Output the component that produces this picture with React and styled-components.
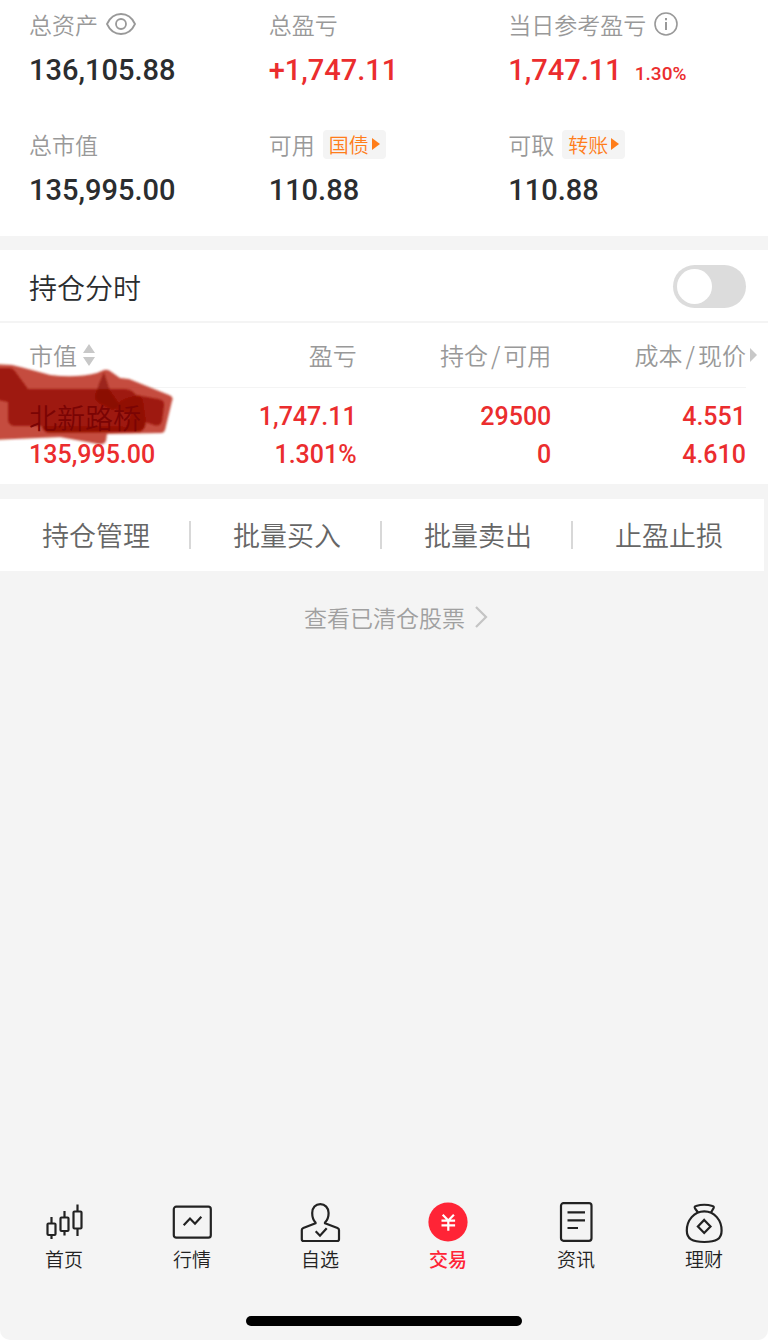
import React, { useState } from "react";
import styled, { createGlobalStyle } from "styled-components";

const colors = {
  page: "#f4f4f4",
  white: "#ffffff",
  text: "#2b2d2f",
  gray: "#999999",
  lightGray: "#c8c8c8",
  line: "#f4f4f4",
  red: "#eb2d2e",
  brand: "#ff2436",
  orange: "#ff7d1a",
};

const positions = [
  {
    name: "北新路桥",
    value: "135,995.00",
    profit: "1,747.11",
    rate: "1.301%",
    held: "29500",
    available: "0",
    cost: "4.551",
    price: "4.610",
  },
];

const actions = ["持仓管理", "批量买入", "批量卖出", "止盈止损"];

const EyeIcon = () => (
  <svg width="30" height="24" viewBox="0 0 30 24" fill="none" stroke="#999" strokeWidth="1.8">
    <path d="M1 12C4 5.500 9 2 15 2s11 3.500 14 10c-3 6.500-8 10-14 10S4 18.500 1 12z" />
    <circle cx="15" cy="12" r="5" />
  </svg>
);

const InfoIcon = () => (
  <svg width="24" height="24" viewBox="0 0 24 24" fill="none" stroke="#999" strokeWidth="1.6">
    <circle cx="12" cy="12" r="11" />
    <path d="M12 10v8" strokeWidth="2" />
    <path d="M12 6v2.200" strokeWidth="2" />
  </svg>
);

const TabIcon = ({ children }) => (
  <TabSvg viewBox="0 0 40 40" fill="none" stroke="currentColor" strokeWidth="2.200">
    {children}
  </TabSvg>
);

const tabs = [
  {
    label: "首页",
    icon: (
      <>
        <rect x="3.500" y="21.500" width="8" height="11.500" rx="1" />
        <rect x="16.500" y="15.500" width="8" height="13.500" rx="1" />
        <rect x="29.500" y="9.500" width="8" height="17" rx="1" />
        <path d="M7.500 15v6.500M7.500 33v4M20.500 9v6.500M20.500 29v4.500M33.500 2.500v7M33.500 26.500V34" />
      </>
    ),
  },
  {
    label: "行情",
    icon: (
      <>
        <rect x="1.800" y="4.700" width="37" height="31" rx="2.500" />
        <path d="M11.700 23.300L18 16.500l5 5.200 6.300-7" />
      </>
    ),
  },
  {
    label: "自选",
    icon: (
      <>
        <path d="M15.500 20.500C13 18 12.200 14.500 12.200 11c0-5.300 3.400-8.800 8.100-8.800s8.300 3.500 8.300 8.800c0 3.500-1 7-3.600 9.500v.8L37.500 26c1 .4 1.500 1 1.500 2v9.300c0 1.200-.5 1.700-1.700 1.700H3.500c-1.200 0-1.700-.5-1.700-1.700V28c0-1 .5-1.600 1.500-2l12.200-4.700z" />
        <path d="M15.700 29.200l4.300 4.500 6.700-7.400" />
      </>
    ),
  },
  {
    label: "交易",
    active: true,
    icon: (
      <>
        <circle cx="20" cy="20" r="19.600" fill="currentColor" stroke="none" />
        <path
          stroke="#fff"
          d="M14.700 12.700l5.600 5.800 5.600-5.800M13.500 18.700h13.600M13.500 23.300h13.600M20.300 18v10.800"
        />
      </>
    ),
  },
  {
    label: "资讯",
    icon: (
      <>
        <rect x="5" y="1.200" width="30.500" height="37.600" rx="2.500" />
        <path d="M11.500 10.400h17.500M11.500 18.400h17.500M11.500 26h10.500" />
      </>
    ),
  },
  {
    label: "理财",
    icon: (
      <>
        <path d="M14 10.500l-3-4.200c-.7-1.200-.2-2 1-2.300 5-1.500 11.500-1.500 16.500 0 1.200.3 1.600 1.100 1 2.300L27 10.500" />
        <path d="M20.300 9.300C10 9.300 2.800 18.500 2.800 28.500c0 8.500 5.500 11.500 17.500 11.500s17.300-3 17.300-11.500c0-10-7-19.200-17.300-19.200z" />
        <path d="M20.200 17.900l6.300 6.500-6.300 6.500-6.300-6.500z" />
      </>
    ),
  },
];

const Summary = () => (
  <SummaryGrid>
    <Item>
      <Label>
        总资产
        <IconButton type="button" aria-label="隐藏资产">
          <EyeIcon />
        </IconButton>
      </Label>
      <Value>136,105.88</Value>
    </Item>
    <Item>
      <Label>总盈亏</Label>
      <Value $up>+1,747.11</Value>
    </Item>
    <Item>
      <Label>
        当日参考盈亏
        <IconButton type="button" aria-label="说明">
          <InfoIcon />
        </IconButton>
      </Label>
      <Value $up>
        1,747.11<Rate>1.30%</Rate>
      </Value>
    </Item>
    <Item>
      <Label>总市值</Label>
      <Value>135,995.00</Value>
    </Item>
    <Item>
      <Label>
        可用
        <Tag type="button">
          国债
          <TagArrow />
        </Tag>
      </Label>
      <Value>110.88</Value>
    </Item>
    <Item>
      <Label>
        可取
        <Tag type="button">
          转账
          <TagArrow />
        </Tag>
      </Label>
      <Value>110.88</Value>
    </Item>
  </SummaryGrid>
);

// brush strokes painted around the stock name
const Brush = () => (
  <BrushSvg viewBox="0 360 180 90" aria-hidden="true">
    <defs>
      <filter id="soft">
        <feGaussianBlur stdDeviation="0.9" />
      </filter>
    </defs>
    <g filter="url(#soft)">
      <path
        fill="#bb2f1c"
        opacity="0.860"
        d="M-6 364L12 365C26 368 38 372 50 375C66 377 82 377 97 373L104 370Q107 369 110 371L120 378L129 379L169 395Q174 397 172 401L165 430Q164 433 161 433L107 434L106 441Q104 445 98 444L60 437L-6 440z"
      />
      <path
        fill="#9a0f05"
        opacity="0.900"
        d="M-6 368L10 368Q14 369 17 374L28 389L124 389Q132 389 136 395L158 399Q165 400 164 406L162 421Q160 427 154 425L145 422Q146 430 139 432L50 433Q43 433 42 426L14 426Q8 425 8 419L8 402L-6 399z"
      />
      <path fill="#7c0500" opacity="0.550" d="M104 372Q98 384 95 397Q96 402 104 405L113 410L119 404L110 391z" />
      <path
        fill="#7c0500"
        opacity="0.400"
        d="M113 408Q122 398 136 396Q142 396 143 403L146 424Q145 429 138 431L50 432Q43 431 42 426L126 427L132 414z"
      />
    </g>
  </BrushSvg>
);

const Positions = () => {
  const [minuteChart, setMinuteChart] = useState(false);

  return (
    <Section>
      <SwitchRow>
        <span>持仓分时</span>
        <Switch
          type="checkbox"
          role="switch"
          checked={minuteChart}
          onChange={(e) => setMinuteChart(e.target.checked)}
        />
      </SwitchRow>
      <TableWrap>
        <Table>
          <thead>
            <tr>
              <Th $first>
                <SortButton type="button">
                  市值
                  <svg width="12" height="22" viewBox="0 0 12 22" fill="#c8c8c8">
                    <path d="M6 0l6 9H0zM0 13h12l-6 9z" />
                  </svg>
                </SortButton>
              </Th>
              <Th>盈亏</Th>
              <Th>
                持仓<Slash>/</Slash>可用
              </Th>
              <Th>
                成本<Slash>/</Slash>现价
                <MoreArrow />
              </Th>
            </tr>
          </thead>
          <tbody>
            {positions.map((p) => (
              <tr key={p.name}>
                <Td $first>
                  <StockName>{p.name}</StockName>
                  <Line>{p.value}</Line>
                </Td>
                <Td>
                  <Line>{p.profit}</Line>
                  <Line>{p.rate}</Line>
                </Td>
                <Td>
                  <Line>{p.held}</Line>
                  <Line>{p.available}</Line>
                </Td>
                <Td>
                  <Line>{p.cost}</Line>
                  <Line>{p.price}</Line>
                </Td>
              </tr>
            ))}
          </tbody>
        </Table>
      </TableWrap>
      <Brush />
    </Section>
  );
};

const App = () => (
  <>
    <GlobalStyle />
    <Screen>
      <Summary />
      <Positions />
      <Actions>
        {actions.map((action) => (
          <Action key={action} type="button">
            {action}
          </Action>
        ))}
      </Actions>
      <ClearedLink href="#cleared">
        查看已清仓股票
        <svg width="14" height="22" viewBox="0 0 14 22" fill="none" stroke="#c4c4c4" strokeWidth="2.200">
          <path d="M2 1l10 10L2 21" />
        </svg>
      </ClearedLink>
      <TabBar>
        {tabs.map((tab) => (
          <Tab key={tab.label} href={`#${tab.label}`} $active={tab.active}>
            <TabIcon>{tab.icon}</TabIcon>
            {tab.label}
          </Tab>
        ))}
      </TabBar>
      <HomeIndicator />
    </Screen>
  </>
);

const GlobalStyle = createGlobalStyle`
  * {
    box-sizing: border-box;
  }

  body {
    margin: 0;
    background: ${colors.white};
    color: ${colors.text};
    font-family: "Noto Sans CJK SC", sans-serif;
    font-weight: 350;
  }

  button {
    border: 0;
    padding: 0;
    background: none;
    color: inherit;
    font: inherit;
  }

  a {
    text-decoration: none;
  }

  svg {
    display: block;
    flex-shrink: 0;
  }
`;

const Screen = styled.div`
  min-height: calc(100vh - 1px);
  display: flex;
  flex-direction: column;
  background: ${colors.page};
  border-radius: 0 0 10px 10px;
`;

const SummaryGrid = styled.section`
  display: grid;
  grid-template-columns: repeat(3, 1fr);
  row-gap: 42px;
  padding: 9px 20px 29px 29px;
  background: ${colors.white};
`;

const Item = styled.div`
  display: flex;
  flex-direction: column;
  gap: 14px;
`;

const Label = styled.div`
  display: flex;
  align-items: center;
  gap: 8px;
  height: 30px;
  color: ${colors.gray};
  font-size: 23px;
  line-height: 30px;
  white-space: nowrap;
`;

const Value = styled.div`
  line-height: 34px;
  color: ${(props) => (props.$up ? colors.red : colors.text)};
  font-family: Roboto, sans-serif;
  font-size: 29px;
  font-weight: 500;
  white-space: nowrap;
`;

const Rate = styled.span`
  margin-left: 13px;
  font-size: 19px;
  line-height: 1;
`;

const IconButton = styled.button`
  display: flex;
`;

const Tag = styled.button`
  display: flex;
  align-items: center;
  gap: 3px;
  height: 29px;
  padding: 0 6px;
  border-radius: 4px;
  background: ${colors.page};
  color: ${colors.orange};
  font-size: 20px;
  line-height: 29px;
`;

const TagArrow = styled.span`
  border: 6px solid transparent;
  border-left: 8px solid ${colors.orange};
  border-right: 0;
`;

const Section = styled.section`
  position: relative;
  margin: 14px 0 15px;
  background: ${colors.white};
`;

const SwitchRow = styled.label`
  display: flex;
  align-items: center;
  justify-content: space-between;
  height: 73px;
  padding: 2px 22px 0 29px;
  border-bottom: 2px solid ${colors.line};
  font-size: 28px;
`;

const Switch = styled.input`
  appearance: none;
  width: 73px;
  height: 43px;
  margin: 0;
  padding: 4px;
  border-radius: 22px;
  background: ${(props) => (props.checked ? colors.brand : "#dcdcdc")};

  &::before {
    content: "";
    display: block;
    width: 35px;
    height: 35px;
    margin-left: ${(props) => (props.checked ? "30px" : "0")};
    border-radius: 50%;
    background: ${colors.white};
  }
`;

const TableWrap = styled.div`
  padding: 0 22px 0 29px;
`;

const Table = styled.table`
  width: 100%;
  table-layout: fixed;
  border-collapse: collapse;
`;

const Th = styled.th`
  position: relative;
  width: ${(props) => (props.$first ? "133px" : "auto")};
  height: 64px;
  padding: 0;
  border-bottom: 1px solid ${colors.line};
  color: ${colors.gray};
  font-size: 24px;
  font-weight: 350;
  text-align: ${(props) => (props.$first ? "left" : "right")};
  white-space: nowrap;
`;

const SortButton = styled.button`
  display: flex;
  align-items: center;
  gap: 6px;
`;

const Slash = styled.span`
  margin: 0 3px;
`;

const MoreArrow = styled.span`
  position: absolute;
  top: 50%;
  right: -11px;
  margin-top: -7px;
  border: 7px solid transparent;
  border-left: 7px solid ${colors.lightGray};
  border-right: 0;
`;

const Td = styled.td`
  padding: 10px 0;
  color: ${colors.red};
  text-align: ${(props) => (props.$first ? "left" : "right")};
  white-space: nowrap;
`;

const Line = styled.div`
  line-height: 38px;
  font-family: Roboto, sans-serif;
  font-size: 25px;
  font-weight: 500;
`;

const StockName = styled.div`
  position: relative;
  z-index: 1;
  line-height: 38px;
  color: #7a0404;
  font-size: 28px;
`;

const BrushSvg = styled.svg`
  position: absolute;
  top: 110px;
  left: 0;
  width: 180px;
  height: 90px;
  pointer-events: none;
`;

const Actions = styled.div`
  display: grid;
  grid-template-columns: repeat(4, 1fr);
  margin-right: 4px;
  padding: 22px 0;
  background: ${colors.white};
`;

const Action = styled.button`
  height: 28px;
  padding-left: 3px;
  border-right: 2px solid #d8d8d8;
  color: #666666;
  font-size: 27px;
  line-height: 28px;

  &:last-child {
    border-right-color: transparent;
  }
`;

const ClearedLink = styled.a`
  display: flex;
  align-items: center;
  align-self: center;
  gap: 9px;
  margin: 29px 0 0 24px;
  color: #a0a0a0;
  font-size: 23px;
  line-height: 34px;
`;

const TabBar = styled.nav`
  display: grid;
  grid-template-columns: repeat(6, 1fr);
  margin-top: auto;
  padding-bottom: 44px;
`;

const Tab = styled.a`
  display: flex;
  flex-direction: column;
  align-items: center;
  gap: 4px;
  color: ${(props) => (props.$active ? colors.brand : "#222222")};
  font-size: 19px;
  font-weight: ${(props) => (props.$active ? 500 : 350)};
  line-height: 26px;
`;

const TabSvg = styled.svg`
  width: 40px;
  height: 40px;
  overflow: visible;
`;

const HomeIndicator = styled.div`
  align-self: center;
  width: 36%;
  height: 10px;
  margin-bottom: 14px;
  border-radius: 5px;
  background: #000000;
`;

export default App;
